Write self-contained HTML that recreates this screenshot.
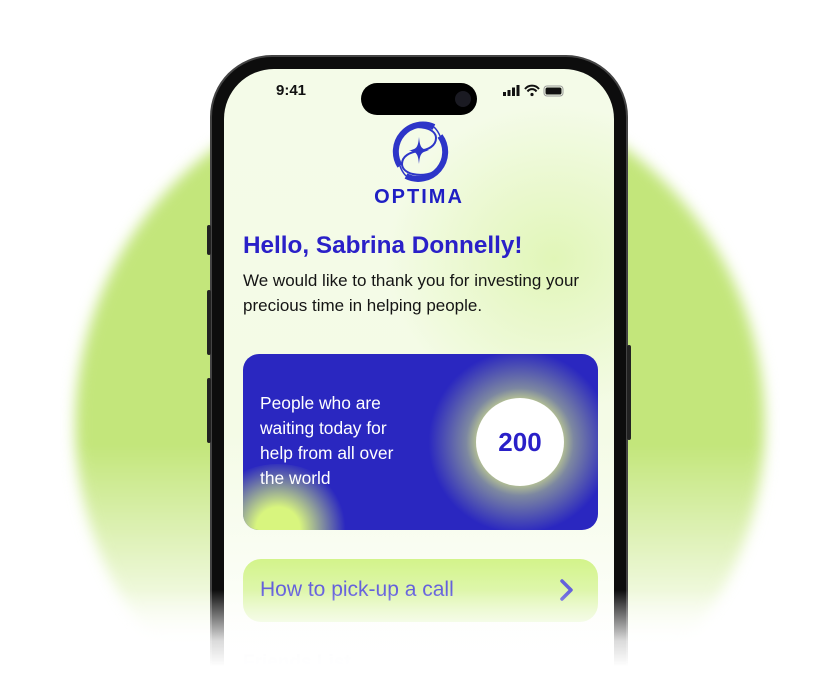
<!DOCTYPE html>
<html><head><style>
*{margin:0;padding:0;box-sizing:border-box}
html,body{width:836px;height:675px;overflow:hidden;background:#fff}
body{position:relative;font-family:"Liberation Sans",sans-serif}
.wrap{position:absolute;left:0;top:0;width:836px;height:675px;overflow:hidden}
.circle{position:absolute;left:60px;top:65px;width:720px;height:610px;background:radial-gradient(circle 350px at 360px 360px,#c3e67b 97%,rgba(195,230,123,0) 100%);filter:blur(6px);
-webkit-mask-image:linear-gradient(180deg,#000 0,#000 380px,rgba(0,0,0,0) 580px);mask-image:linear-gradient(180deg,#000 0,#000 380px,rgba(0,0,0,0) 580px)}
.phone{position:absolute;left:210px;top:55px;width:418px;height:620px;border-radius:62px 62px 0 0;background:#0d0d0d;border:2px solid #444;border-bottom:none}
.screen{position:absolute;left:224px;top:69px;width:390px;height:606px;border-radius:50px 50px 0 0;overflow:hidden;
background:radial-gradient(ellipse 240px 220px at 330px 190px,#e1f6b8,rgba(255,255,255,0) 70%),linear-gradient(180deg,#f4fbe8,#f4fbe6 60%,#fff);}
.btn{position:absolute;background:#222;width:4px;border-radius:2px}
.island{position:absolute;left:137px;top:14px;width:116px;height:32px;border-radius:16px;background:#000}
.time{position:absolute;left:52px;top:13px;font-size:15px;font-weight:bold;color:#111}
.fade{position:absolute;left:0;top:590px;width:836px;height:85px;background:linear-gradient(180deg,rgba(255,255,255,0),rgba(255,255,255,.85) 60%,#fff 90%)}
h1{position:absolute;left:19px;top:163px;font-size:24.3px;color:#2a20c8;font-weight:bold}
.p{position:absolute;left:19px;top:199px;font-size:17px;line-height:25px;color:#151515;width:370px}
.card{position:absolute;left:19px;top:285px;width:355px;height:176px;border-radius:16px;overflow:hidden;background:#2a27c0}
.btn2{position:absolute;left:19px;top:490px;width:355px;height:63px;border-radius:18px;background:linear-gradient(180deg,#d3f48a,#e9f8cc);}
</style></head><body><div class="wrap">
<div class="circle"></div>
<div class="phone"></div>
<div class="btn" style="left:207px;top:225px;height:30px"></div>
<div class="btn" style="left:207px;top:290px;height:65px"></div>
<div class="btn" style="left:207px;top:378px;height:65px"></div>
<div class="btn" style="left:627px;top:345px;height:95px"></div>
<div class="screen">
<div class="island"><div style="position:absolute;right:6px;top:8px;width:16px;height:16px;border-radius:50%;background:#1a1a22"></div></div>
<div class="time">9:41</div>
<svg style="position:absolute;left:279px;top:15px" width="62" height="14" viewBox="0 0 62 14">
<rect x="0" y="8" width="3" height="4" fill="#111"/><rect x="4.5" y="6" width="3" height="6" fill="#111"/><rect x="9" y="3.5" width="3" height="8.5" fill="#111"/><rect x="13.5" y="1" width="3" height="11" fill="#111"/>
<path d="M22 5 A9 9 0 0 1 36 5 M24.5 7.5 A5.5 5.5 0 0 1 33.5 7.5" stroke="#111" stroke-width="2" fill="none"/><circle cx="29" cy="10.5" r="1.6" fill="#111"/>
<rect x="41" y="2" width="19" height="10" rx="3" fill="none" stroke="#999" stroke-width="1"/><rect x="42.5" y="3.5" width="16" height="7" rx="1.8" fill="#111"/>
</svg>
<svg style="position:absolute;left:164px;top:51px" width="62" height="62" viewBox="0 0 62 62">
<g fill="none" stroke="#2d35c8">
<path d="M12 46 A27 27 0 0 1 46 7" stroke-width="6"/>
<path d="M52 16 A27 27 0 0 1 18 56" stroke-width="6"/>
<path d="M46 7 A27 27 0 0 1 52 16 M18 56 A27 27 0 0 1 12 46" stroke-width="1.5"/>
<path d="M16 10 C30 4 48 8 48 18 C48 26 40 30 31 31 C22 32 14 36 14 44 C14 54 32 58 46 52" stroke-width="2"/>
</g>
<path d="M31 17 C32 27 33 29 41 30.5 C33 32 32 34 31 44 C30 34 29 32 21 30.5 C29 29 30 27 31 17 Z" fill="#2d35c8"/>
</svg>
<div style="position:absolute;left:0;width:390px;top:117px;text-align:center;font-size:20px;letter-spacing:2px;color:#1f1fc4;font-weight:bold">OPTIMA</div>
<h1>Hello, Sabrina Donnelly!</h1>
<div class="p">We would like to thank you for investing your precious time in helping people.</div>
<div class="card">
<div style="position:absolute;left:-40px;top:110px;width:150px;height:130px;border-radius:50%;background:radial-gradient(circle,#d8f57e 22%,rgba(216,245,126,0) 68%)"></div>
<div style="position:absolute;left:177px;top:-2px;width:200px;height:180px;border-radius:50%;background:radial-gradient(circle,#e5f28a 25%,rgba(180,200,140,0.6) 40%,rgba(42,39,192,0) 68%)"></div>
<div style="position:absolute;left:233px;top:44px;width:88px;height:88px;border-radius:50%;background:#fff;color:#2a20c8;font-size:26px;font-weight:bold;text-align:center;line-height:88px">200</div>
<div style="position:absolute;left:17px;top:37px;font-size:17.4px;line-height:25px;color:#fff;width:155px">People who are waiting today for help from all over the world</div>
</div>
<div class="btn2">
<div style="position:absolute;left:17px;top:19px;font-size:21px;color:#6460dc">How to pick-up a call</div>
<svg style="position:absolute;left:315px;top:19px" width="18" height="24" viewBox="0 0 18 24"><path d="M4 3 L13 12 L4 21" stroke="#6460dc" stroke-width="3.5" fill="none" stroke-linecap="round" stroke-linejoin="round"/></svg>
</div>
<div style="position:absolute;left:19px;top:583px;font-size:19px;font-weight:bold;color:#e0e4f4">Friends List</div>
</div>
<div class="fade"></div>
</div></body></html>
